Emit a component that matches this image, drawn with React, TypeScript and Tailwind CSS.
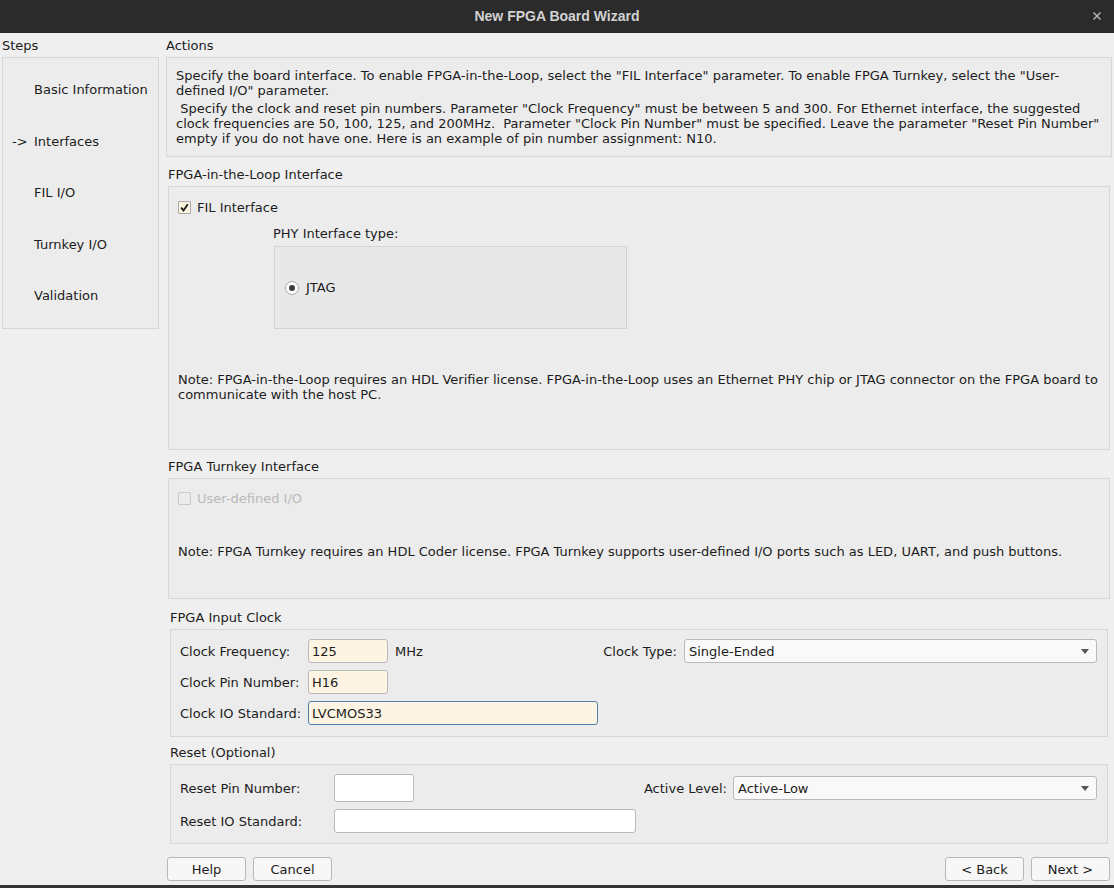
import React from 'react';

const steps = ['Basic Information', 'Interfaces', 'FIL I/O', 'Turnkey I/O', 'Validation'];

function Checkbox({ checked, disabled }: { checked?: boolean; disabled?: boolean }) {
  return (
    <span
      className={
        'flex h-[13px] w-[13px] shrink-0 items-center justify-center rounded-[1px] border ' +
        (disabled ? 'border-[#c9c9c9] bg-[#ececec]' : 'border-[#a9a9a9] bg-[#fdf3e1]')
      }
    >
      {checked && (
        <svg width="9" height="9" viewBox="0 0 9 9">
          <path d="M1.2 4.6 L3.5 7.4 L7.8 1.2" fill="none" stroke="#1a1a1a" strokeWidth="1.8" />
        </svg>
      )}
    </span>
  );
}

function Radio() {
  return (
    <span className="flex h-[14px] w-[14px] shrink-0 items-center justify-center rounded-full border border-[#a3a3a3] bg-white">
      <span className="h-[6px] w-[6px] rounded-full bg-[#3a3a3a]" />
    </span>
  );
}

function Field({ value, w, h = 'h-[24px]', tone = 'cream', focused }: { value?: string; w: string; h?: string; tone?: 'cream' | 'white'; focused?: boolean }) {
  return (
    <div
      className={
        'flex shrink-0 items-center rounded-[3px] border px-[3px] ' +
        w + ' ' + h + ' ' +
        (tone === 'cream' ? 'bg-[#fdf4e3] ' : 'bg-white ') +
        (focused ? 'border-[#4d7fa9]' : 'border-[#b9b9b9]')
      }
    >
      {value}
    </div>
  );
}

function Select({ value, w }: { value: string; w: string }) {
  return (
    <div className={'flex h-[24px] shrink-0 items-center justify-between rounded-[3px] border border-[#bababa] bg-[#f9f9f9] pl-[4px] pr-[7px] ' + w}>
      <span>{value}</span>
      <svg width="8" height="5" viewBox="0 0 8 5">
        <path d="M0 0 H8 L4 5 Z" fill="#555" />
      </svg>
    </div>
  );
}

function Btn({ label }: { label: string }) {
  return (
    <button className="flex h-[24px] w-[79px] items-center justify-center rounded-[3px] border border-[#b7b7b7] bg-[#f7f7f7] text-[#1c1c1c]">
      {label}
    </button>
  );
}

function GroupLabel({ text, h, pl }: { text: string; h: string; pl: string }) {
  return (
    <div className={'flex items-end pb-[4px] leading-[15px] ' + h + ' ' + pl}>{text}</div>
  );
}

export default function App() {
  return (
    <div
      className="flex h-[888px] w-[1114px] flex-col overflow-hidden bg-[#efefef] text-[13px] leading-[15px] text-[#1c1c1c]"
      style={{ fontFamily: "'DejaVu Sans', sans-serif" }}
    >
      {/* title bar */}
      <div className="relative flex h-[33px] shrink-0 items-center justify-center bg-[#2b2b2b]">
        <span className="text-[14px] font-bold text-[#d2d2d2]" style={{ fontFamily: "'Liberation Sans', sans-serif" }}>
          New FPGA Board Wizard
        </span>
        <svg className="absolute right-[13px] top-[12px]" width="8" height="8" viewBox="0 0 8 8">
          <path d="M0.5 0.5 L7.5 7.5 M7.5 0.5 L0.5 7.5" stroke="#bdbdbd" strokeWidth="1.3" />
        </svg>
      </div>

      <div className="flex flex-1">
        {/* steps */}
        <div className="ml-[2px] w-[157px] shrink-0">
          <div className="flex h-[24px] items-center">Steps</div>
          <div className="h-[272px] border border-[#d6d6d6] bg-[#ececec] pt-[6px]">
            {steps.map((s) => (
              <div key={s} className="flex h-[51.5px] items-center pl-[9px]">
                <span className="w-[22px]">{s === 'Interfaces' ? '->' : ''}</span>
                <span>{s}</span>
              </div>
            ))}
          </div>
        </div>

        {/* actions */}
        <div className="ml-[7px] flex w-[946px] flex-col">
          <div className="flex h-[24px] items-center">Actions</div>
          <div className="h-[100px] border border-[#d6d6d6] bg-[#ececec] px-[9px] pt-[10px]">
            <div>Specify the board interface. To enable FPGA-in-the-Loop, select the "FIL Interface" parameter. To enable FPGA Turnkey, select the "User-</div>
            <div>defined I/O" parameter.</div>
            <div className="mt-[3px] whitespace-pre"> Specify the clock and reset pin numbers. Parameter "Clock Frequency" must be between 5 and 300. For Ethernet interface, the suggested</div>
            <div className="whitespace-pre">clock frequencies are 50, 100, 125, and 200MHz.  Parameter "Clock Pin Number" must be specified. Leave the parameter "Reset Pin Number"</div>
            <div>empty if you do not have one. Here is an example of pin number assignment: N10.</div>
          </div>

          <GroupLabel text="FPGA-in-the-Loop Interface" h="h-[29px]" pl="pl-[2px]" />
          <div className="mx-[2px] h-[264px] border border-[#d6d6d6] bg-[#ececec] pl-[9px]">
            <div className="mt-[13px] flex h-[15px] items-center gap-[6px]">
              <Checkbox checked />
              <span>FIL Interface</span>
            </div>
            <div className="ml-[95px] mt-[11px] h-[15px]">PHY Interface type:</div>
            <div className="ml-[96px] mt-[5px] flex h-[83px] w-[353px] items-center border border-[#d2d2d2] bg-[#e8e8e8] pl-[10px]">
              <div className="flex items-center gap-[7px]">
                <Radio />
                <span>JTAG</span>
              </div>
            </div>
            <div className="mt-[43px]">
              <div>Note: FPGA-in-the-Loop requires an HDL Verifier license. FPGA-in-the-Loop uses an Ethernet PHY chip or JTAG connector on the FPGA board to</div>
              <div>communicate with the host PC.</div>
            </div>
          </div>

          <GroupLabel text="FPGA Turnkey Interface" h="h-[28px]" pl="pl-[2px]" />
          <div className="mx-[2px] h-[121px] border border-[#d6d6d6] bg-[#ececec] pl-[9px]">
            <div className="mt-[12px] flex h-[15px] items-center gap-[6px]">
              <Checkbox disabled />
              <span className="text-[#b9b9b9]">User-defined I/O</span>
            </div>
            <div className="mt-[38px]">
              Note: FPGA Turnkey requires an HDL Coder license. FPGA Turnkey supports user-defined I/O ports such as LED, UART, and push buttons.
            </div>
          </div>

          <GroupLabel text="FPGA Input Clock" h="h-[30px]" pl="pl-[4px]" />
          <div className="mx-[4px] flex h-[108px] flex-col gap-[7px] border border-[#d6d6d6] bg-[#ececec] pl-[9px] pr-[10px] pt-[9px]">
            <div className="flex items-center">
              <span className="w-[128px] shrink-0">Clock Frequency:</span>
              <Field value="125" w="w-[80px]" />
              <span className="ml-[7px]">MHz</span>
              <div className="flex-1" />
              <span className="mr-[7px]">Clock Type:</span>
              <Select value="Single-Ended" w="w-[413px]" />
            </div>
            <div className="flex items-center">
              <span className="w-[128px] shrink-0">Clock Pin Number:</span>
              <Field value="H16" w="w-[80px]" />
            </div>
            <div className="flex items-center">
              <span className="w-[128px] shrink-0">Clock IO Standard:</span>
              <Field value="LVCMOS33" w="w-[290px]" focused />
            </div>
          </div>

          <GroupLabel text="Reset (Optional)" h="h-[27px]" pl="pl-[4px]" />
          <div className="mx-[4px] flex h-[80px] flex-col gap-[7px] border border-[#d6d6d6] bg-[#ececec] pl-[9px] pr-[10px] pt-[9px]">
            <div className="flex items-center">
              <span className="w-[154px] shrink-0">Reset Pin Number:</span>
              <Field w="w-[80px]" h="h-[28px]" tone="white" />
              <div className="flex-1" />
              <span className="mr-[6px]">Active Level:</span>
              <Select value="Active-Low" w="w-[364px]" />
            </div>
            <div className="flex items-center">
              <span className="w-[154px] shrink-0">Reset IO Standard:</span>
              <Field w="w-[302px]" tone="white" />
            </div>
          </div>

          <div className="ml-[1px] mr-[2px] mt-[13px] flex items-center">
            <div className="flex gap-[7px]">
              <Btn label="Help" />
              <Btn label="Cancel" />
            </div>
            <div className="flex-1" />
            <div className="flex gap-[7px]">
              <Btn label="< Back" />
              <Btn label="Next >" />
            </div>
          </div>
        </div>
      </div>
      <div className="h-[3px] shrink-0 bg-[#333333]" />
    </div>
  );
}
